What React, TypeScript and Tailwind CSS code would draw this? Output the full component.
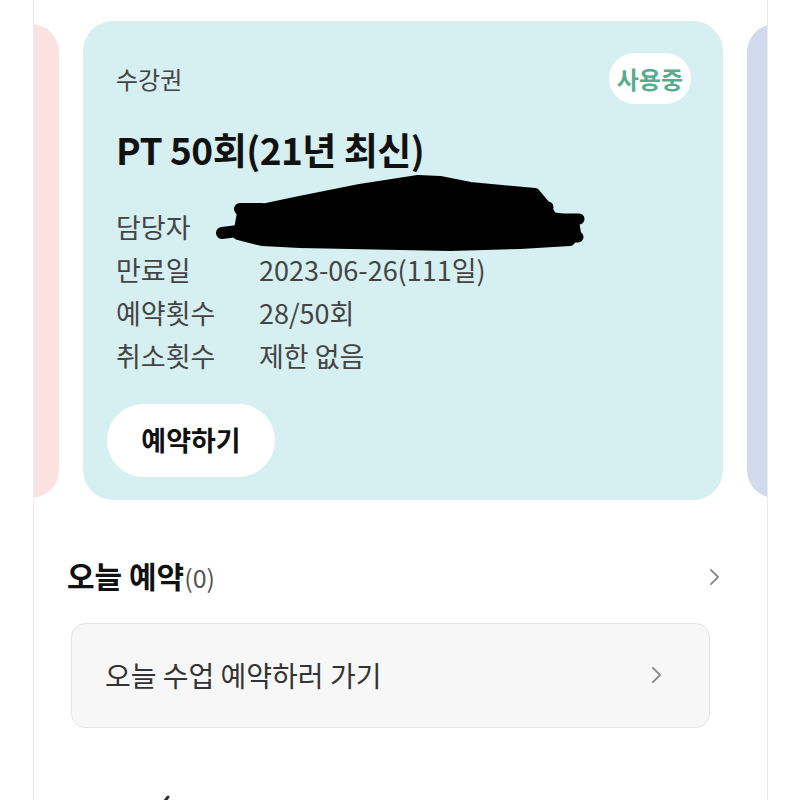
import React from "react";

const Chevron = ({ className }: { className?: string }) => (
  <svg viewBox="0 0 12 20" className={className} fill="none" stroke="currentColor" strokeWidth="2" strokeLinecap="round" strokeLinejoin="round">
    <polyline points="2,2 10,10 2,18" />
  </svg>
);

// marker scribble hiding the trainer name
const Scribble = () => (
  <svg className="absolute left-[99px] top-[-34px] w-[375px] h-[80px] pointer-events-none" viewBox="215 175 375 80">
    <g stroke="#000" strokeLinecap="round" strokeLinejoin="round" fill="#000">
      <polygon
        strokeWidth="10"
        points="242,216 300,204 360,192 418,183 440,184 470,190 535,196 545,208 552,220 574,224 576,236 570,244 520,247 450,249 300,246 262,244 238,238"
      />
      <line x1="222" y1="236" x2="270" y2="230" strokeWidth="12" />
      <line x1="240" y1="212" x2="262" y2="212" strokeWidth="12" />
      <line x1="500" y1="210" x2="548" y2="210" strokeWidth="11" />
      <line x1="520" y1="222" x2="579" y2="222" strokeWidth="11" />
      <line x1="520" y1="238" x2="578" y2="240" strokeWidth="11" />
    </g>
  </svg>
);

const rows = [
  { label: "담당자", value: "", hidden: true },
  { label: "만료일", value: "2023-06-26(111일)" },
  { label: "예약횟수", value: "28/50회" },
  { label: "취소횟수", value: "제한 없음" },
];

export default function App() {
  return (
    <div className="min-h-[800px] bg-white font-['Noto_Sans_CJK_KR',sans-serif] overflow-hidden">
      <div className="w-[735px] ml-[33px] min-h-[800px] border-x border-[#ebebeb] bg-white">
        {/* Pass carousel */}
        <div className="flex justify-center gap-[24px] overflow-hidden pt-[21px] pl-[5px]">
          <div className="w-[640px] h-[474px] shrink-0 self-center rounded-[28px] bg-[#fbe1e1]" />

          <div className="relative w-[640px] shrink-0 rounded-[30px] bg-[#d6eff1] pl-[33px] pr-[32px] pt-[32px] pb-[23px]">
            <div className="flex items-center justify-between">
              <span className="text-[24px] text-[#444]">수강권</span>
              <span className="flex h-[51px] items-center rounded-full bg-white px-[8px] text-[24px] font-bold text-[#56ad8b]">
                사용중
              </span>
            </div>
            <h2 className="mt-[24px] text-[37px] leading-[42px] font-bold text-[#111] tracking-[-0.5px]">
              PT 50회(21년 최신)
            </h2>
            <div className="mt-[36px]">
              {rows.map((row) => (
                <div key={row.label} className="relative flex h-[43px] items-center text-[27px] text-[#444]">
                  <span className="w-[143px]">{row.label}</span>
                  <span>{row.value}</span>
                  {row.hidden && <Scribble />}
                </div>
              ))}
            </div>
            <button className="mt-[26px] ml-[-9px] flex h-[73px] w-[168px] items-center justify-center rounded-full bg-white text-[27px] font-bold text-[#111]">
              예약하기
            </button>
          </div>

          <div className="w-[640px] h-[474px] shrink-0 self-center rounded-[28px] bg-[#d2daee]" />
        </div>

        {/* Today's reservations */}
        <div className="mt-[57px] flex items-center justify-between pl-[33px] pr-[47px]">
          <div className="flex items-baseline">
            <span className="text-[30px] leading-[36px] font-bold text-[#111]">오늘 예약</span>
            <span className="text-[25px] text-[#555]">(0)</span>
          </div>
          <Chevron className="h-[18px] w-[11px] text-[#888]" />
        </div>

        <div className="mt-[26px] ml-[37px] mr-[57px] flex h-[105px] items-center justify-between rounded-[14px] border border-[#e4e4e4] bg-[#f7f7f7] pl-[33px] pr-[47px]">
          <span className="text-[28px] text-[#333]">오늘 수업 예약하러 가기</span>
          <Chevron className="h-[18px] w-[11px] text-[#888]" />
        </div>

        {/* next section, cut off by the viewport */}
        <div className="mt-[66px] flex justify-between pl-[124px] pr-[110px]">
          <svg viewBox="0 0 24 24" className="h-[24px] w-[24px]" fill="none" stroke="#333" strokeWidth="3" strokeLinecap="round">
            <polyline points="10,3 6,8 10,13" />
          </svg>
          <svg viewBox="0 0 24 24" className="h-[24px] w-[22px]" fill="#333">
            <path d="M12 21s-8-5.5-8-11a4.5 4.5 0 0 1 8-2.8A4.5 4.5 0 0 1 20 10c0 5.5-8 11-8 11z" />
          </svg>
        </div>
      </div>
    </div>
  );
}
